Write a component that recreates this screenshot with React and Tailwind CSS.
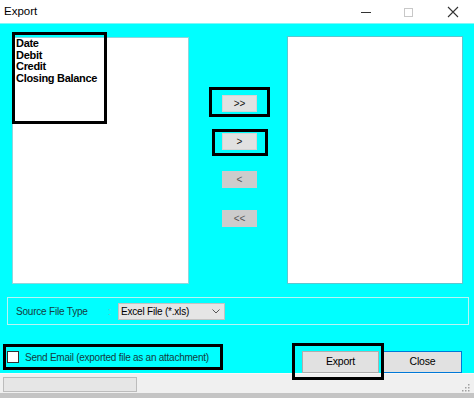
import React from 'react';

const FONT = "font-['Liberation_Sans',Arial,sans-serif]";

function Frame({ className }) {
  // black highlight rectangle drawn over the dialog
  return <div className={`absolute pointer-events-none border-[3px] border-black ${className}`} />;
}

function SmallButton({ label, disabled, children }) {
  return (
    <div
      className={`relative w-[35px] h-[17px] flex items-center justify-center text-[10px] leading-none border ${
        disabled ? 'bg-[#cccccc] border-[#cccccc] text-[#555]' : 'bg-[#e1e1e1] border-[#d4d4d4] text-[#111]'
      }`}
    >
      {label}
      {children}
    </div>
  );
}

export default function App() {
  return (
    <div className={`w-[474px] h-[398px] flex flex-col bg-white overflow-hidden ${FONT}`}>
      {/* Title bar */}
      <div className="h-[23px] flex items-center bg-white">
        <span className="ml-[4px] text-[11.5px] text-black">Export</span>
        <div className="ml-auto flex items-center h-full">
          <svg width="12" height="12" viewBox="0 0 12 12" className="mr-[31px]">
            <line x1="1" y1="6.5" x2="11" y2="6.5" stroke="#333" strokeWidth="1" />
          </svg>
          <svg width="10" height="10" viewBox="0 0 10 10" className="mr-[34px]">
            <rect x="1.5" y="1.5" width="8" height="8" fill="none" stroke="#c8c8c8" strokeWidth="1" />
          </svg>
          <svg width="12" height="12" viewBox="0 0 12 12" className="mr-[15px]">
            <path d="M1 1 L11 11 M11 1 L1 11" stroke="#333" strokeWidth="1.1" />
          </svg>
        </div>
      </div>

      {/* Dialog body */}
      <div className="h-[350px] bg-[#00ffff] flex flex-col border-t border-[#7ff8f8]">
        {/* Lists */}
        <div className="mt-[13px] ml-[12px] flex">
          <div className="relative w-[177px] h-[247px] bg-white border border-[#8fd6dc] pl-[3px]">
            <div className="text-[11px] leading-[11.7px] font-bold text-black tracking-[-0.3px]">
              <div>Date</div>
              <div>Debit</div>
              <div>Credit</div>
              <div>Closing Balance</div>
            </div>
            <Frame className="left-[-1px] top-[-6px] w-[95px] h-[92px]" />
          </div>

          <div className="w-[98px] flex flex-col items-start pl-[33px]">
            <div className="mt-[58px]">
              <SmallButton label=">>">
                <Frame className="left-[-14px] top-[-9px] w-[61px] h-[30px]" />
              </SmallButton>
            </div>
            <div className="mt-[21px]">
              <SmallButton label=">">
                <Frame className="left-[-11px] top-[-5px] w-[56px] h-[27px]" />
              </SmallButton>
            </div>
            <div className="mt-[21px]">
              <SmallButton label="<" disabled />
            </div>
            <div className="mt-[22px]">
              <SmallButton label="<<" disabled />
            </div>
          </div>

          <div className="w-[176px] h-[248px] -mt-[1px] bg-white border border-[#5ec6cf]" />
        </div>

        {/* Source file type group */}
        <div className="mt-[13px] ml-[7px] w-[462px] h-[28px] border border-[#b8f4f4] flex items-center pl-[8px]">
          <span className="text-[10px] tracking-[-0.2px] text-[#153c3e] w-[92px]">Source File Type</span>
          <span className="text-[10px] text-[#7fbdbd] w-[10px]">:</span>
          <div className="w-[107px] h-[17px] bg-[#e5e5e5] border border-[#c2c2c2] flex items-center pl-[2px] pr-[4px]">
            <span className="text-[10px] tracking-[-0.2px] text-black">Excel File (*.xls)</span>
            <svg width="8" height="5" viewBox="0 0 8 5" className="ml-auto">
              <path d="M0.5 0.5 L4 4 L7.5 0.5" fill="none" stroke="#555" strokeWidth="1" />
            </svg>
          </div>
        </div>

        {/* Bottom row */}
        <div className="mt-[26px] flex items-start">
          <div className="relative ml-[7px] h-[12px] flex items-center gap-[6px]">
            <div className="w-[12px] h-[12px] bg-white border border-[#333]" />
            <span className="text-[10px] tracking-[-0.25px] text-[#153c3e] whitespace-nowrap">
              Send Email (exported file as an attachment)
            </span>
            <Frame className="left-[-4px] top-[-7px] w-[220px] h-[26px]" />
          </div>
          <div className="ml-auto mr-[12px] flex gap-[4px]">
            <div className="relative z-10 w-[77px] h-[22px] bg-[#e1e1e1] border border-[#adadad] flex items-center justify-center text-[10.5px] text-black tracking-[-0.2px]">
              Export
              <Frame className="left-[-11px] top-[-9px] w-[92px] h-[37px]" />
            </div>
            <div className="w-[79px] h-[22px] bg-[#e1e1e1] border border-[#0078d7] flex items-center justify-center text-[10.5px] text-black tracking-[-0.2px]">
              Close
            </div>
          </div>
        </div>
      </div>

      {/* Status bar */}
      <div className="h-[25px] bg-[#f0f0f0] border-t border-[#f8f8f8] border-b-[5px] border-b-[#c4c4c4] flex items-start">
        <div className="mt-[3px] ml-[3px] w-[134px] h-[15px] bg-[#e6e6e6] border border-[#bcbcbc]" />
        <svg width="8" height="8" viewBox="0 0 8 8" className="ml-auto mr-[4px] mt-[10px]">
          <rect x="6" y="0" width="1.5" height="1.5" fill="#a0a0a0" />
          <rect x="3" y="3" width="1.5" height="1.5" fill="#a0a0a0" />
          <rect x="6" y="3" width="1.5" height="1.5" fill="#a0a0a0" />
          <rect x="0" y="6" width="1.5" height="1.5" fill="#a0a0a0" />
          <rect x="3" y="6" width="1.5" height="1.5" fill="#a0a0a0" />
          <rect x="6" y="6" width="1.5" height="1.5" fill="#a0a0a0" />
        </svg>
      </div>
    </div>
  );
}
